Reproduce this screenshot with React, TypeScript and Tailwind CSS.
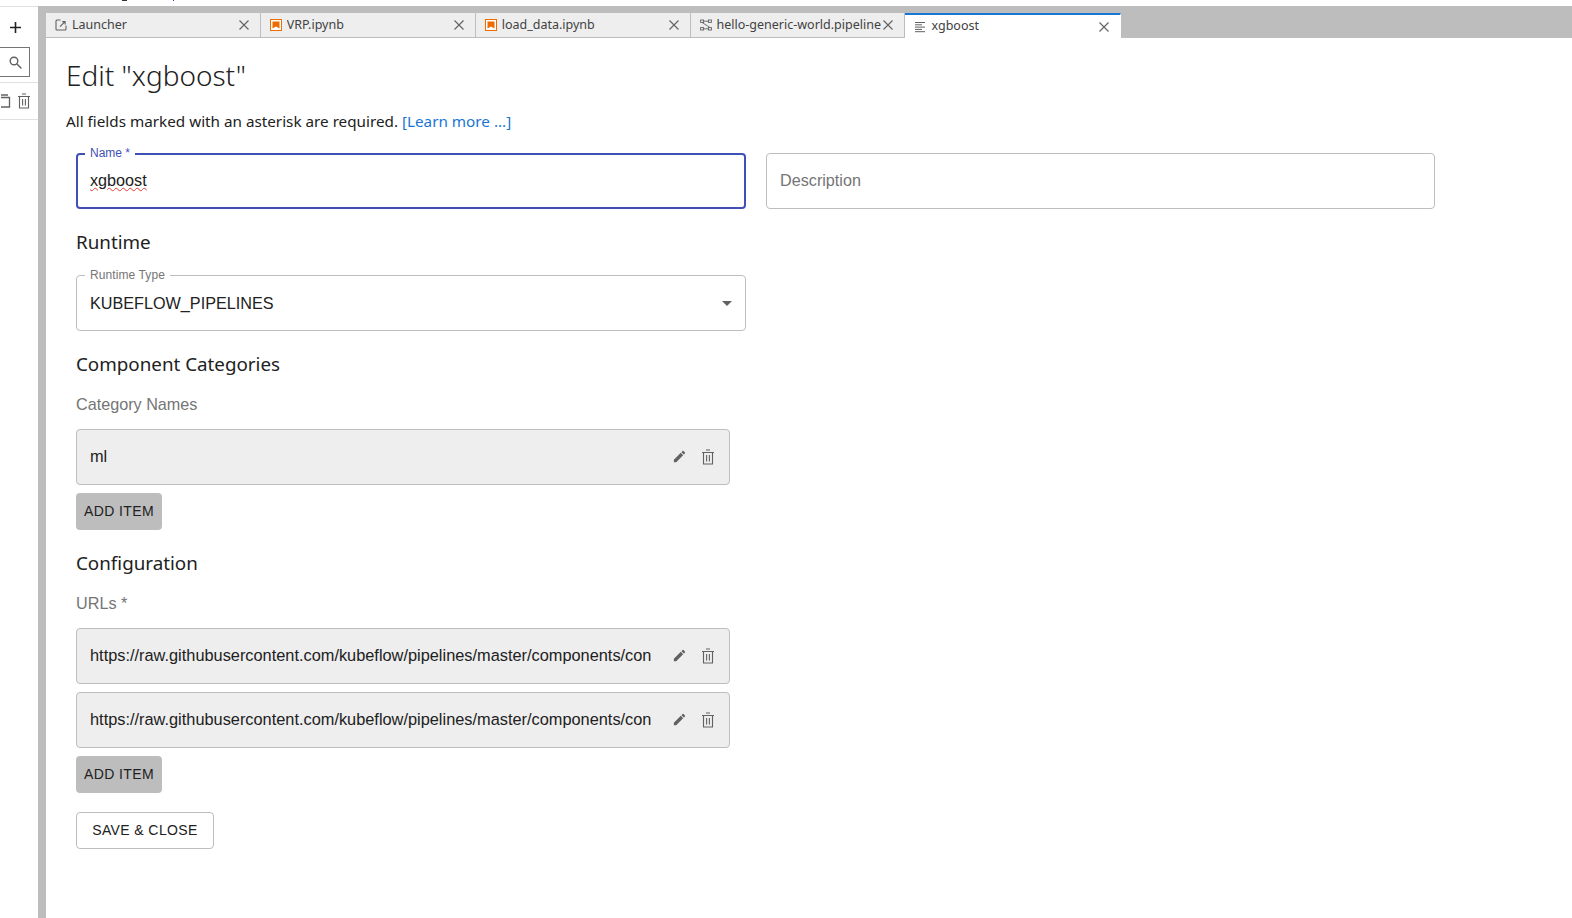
import type { ReactNode } from "react";

const pencil =
  "M3 17.25V21h3.75L17.81 9.94l-3.75-3.75L3 17.25zM20.71 7.04c.39-.39.39-1.02 0-1.41l-2.34-2.34c-.39-.39-1.02-.39-1.41 0l-1.83 1.83 3.75 3.75 1.83-1.83z";

const url = "https://raw.githubusercontent.com/kubeflow/pipelines/master/components/contrib/XGBoost/Train/component.yaml";

function CloseIcon() {
  return (
    <svg width="12" height="12" viewBox="0 0 12 12" className="shrink-0" stroke="#616161" strokeWidth="1.1" fill="none">
      <path d="M1.5 1.5l9 9M10.5 1.5l-9 9" />
    </svg>
  );
}

function TrashIcon({ color = "#616161" }: { color?: string }) {
  return (
    <svg width="14" height="16" viewBox="0 0 14 16" fill="none" stroke={color} strokeWidth="1.1">
      <path d="M1 3.5h12M5 1h4M2.5 3.5v11.5h9V3.5M5.6 6v6.5M8.4 6v6.5" />
    </svg>
  );
}

function LauncherIcon() {
  return (
    <svg width="12" height="12" viewBox="0 0 12 12" fill="none" stroke="#616161" strokeWidth="1.1">
      <path d="M5.5 1H2a1 1 0 0 0-1 1v8a1 1 0 0 0 1 1h8a1 1 0 0 0 1-1V6.5M7.2 2.6h2.9v2.9M10 2.7L5 7.7" />
    </svg>
  );
}

function NotebookIcon() {
  return (
    <svg width="12" height="12" viewBox="0 0 12 12">
      <rect x="0.5" y="0.5" width="11" height="11" fill="#fff" stroke="#ef6c00" />
      <path d="M2.5 2.5h7v7L6 7.5l-3.5 2z" fill="#ef6c00" />
    </svg>
  );
}

function PipelineIcon() {
  return (
    <svg width="12" height="12" viewBox="0 0 12 12" fill="none" stroke="#616161" strokeWidth="0.9">
      <rect x="0.6" y="1" width="3" height="2.4" />
      <rect x="8.4" y="1" width="3" height="2.4" />
      <rect x="0.6" y="8.6" width="3" height="2.4" />
      <rect x="8.4" y="8.6" width="3" height="2.4" />
      <path d="M3.6 2.2h4.8M2 3.4L10 8.6M3.6 9.8h4.8" />
    </svg>
  );
}

function TextIcon() {
  return (
    <svg width="12" height="12" viewBox="0 0 12 12" stroke="#616161" strokeWidth="1">
      <path d="M1 1.5h10M1 3.8h7M1 6.1h10M1 8.4h7M1 10.7h10" />
    </svg>
  );
}

function Tab({ icon, title, active }: { icon: ReactNode; title: string; active?: boolean }) {
  return (
    <div
      className={`flex items-center shrink-0 pl-[9px] pr-[10px] border-r ${
        active
          ? "w-[215.5px] h-[25px] bg-white border-t-2 border-t-[#1976d2] border-r-transparent"
          : "w-[214.85px] h-[25px] bg-[#eeeeee] border-r-[#bdbdbd] border-b border-b-[#bdbdbd]"
      }`}
    >
      <span className="w-[17px] shrink-0 flex items-center">{icon}</span>
      <span className="flex-1 min-w-0 overflow-hidden whitespace-nowrap text-[12.5px] text-[#424242] font-['Noto_Sans',sans-serif]">
        {title}
      </span>
      <CloseIcon />
    </div>
  );
}

function SectionHeading({ children, className }: { children: ReactNode; className: string }) {
  return <h2 className={`text-[18.8px] leading-6 text-[#212121] font-['Noto_Sans',sans-serif] ${className}`}>{children}</h2>;
}

function ListItem({ text, className = "" }: { text: string; className?: string }) {
  return (
    <div className={`w-[654px] h-[56px] bg-[#eeeeee] border border-[#bdbdbd] rounded flex items-center pl-[13px] ${className}`}>
      <span className="w-[561px] -mt-[2px] overflow-hidden whitespace-nowrap text-[16.35px] text-[#212121]">{text}</span>
      <div className="ml-[21px] -mt-[1px] flex items-center gap-[14px]">
        <svg width="15" height="15" viewBox="0 0 24 24" fill="#616161">
          <path d={pencil} />
        </svg>
        <TrashIcon />
      </div>
    </div>
  );
}

function AddItem({ className }: { className: string }) {
  return (
    <button className={`block w-[86px] h-[37px] pb-[1px] bg-[#bdbdbd] rounded text-sm tracking-[0.4px] text-[#212121] ${className}`}>
      ADD ITEM
    </button>
  );
}

export default function App() {
  return (
    <div className="h-[918px] w-[1572px] overflow-hidden bg-white flex flex-col font-['Liberation_Sans',sans-serif]">
      {/* bottom of a text line, mostly cut off by the screenshot */}
      <div className="h-[6px] bg-white flex items-start pl-[122px]">
        <span className="w-[5px] h-[1px] bg-[#333333]" />
        <span className="ml-[46px] w-[1px] h-[1px] bg-[#7b1fa2]" />
      </div>
      <div className="flex flex-1 min-h-0">
        {/* left panel, cut off by the screenshot */}
        <aside className="w-[38px] shrink-0 bg-white border-t border-[#e0e0e0] flex flex-col">
          <div className="h-[40px] flex items-center justify-start pl-[10px] text-[#212121]">
            <svg width="11" height="11" viewBox="0 0 11 11" stroke="#212121" strokeWidth="1.6">
              <path d="M5.5 0v11M0 5.5h11" />
            </svg>
          </div>
          <div className="w-[30px] h-[30px] border border-l-0 border-[#757575] flex items-center justify-end pr-[7px]">
            <svg width="13" height="13" viewBox="0 0 13 13" fill="none" stroke="#616161" strokeWidth="1.4">
              <circle cx="5" cy="5" r="3.8" />
              <path d="M8 8l4.4 4.4" />
            </svg>
          </div>
          <div className="mt-[5px] h-[38px] border-y border-[#e0e0e0] flex items-center justify-end pr-[7px] gap-[6px] overflow-hidden">
            <svg width="10" height="14" viewBox="0 0 10 14" fill="none" stroke="#616161" strokeWidth="1.3">
              <path d="M-2 1h9M-1 3.5h9.5v9.5H-1z" />
            </svg>
            <TrashIcon />
          </div>
        </aside>

        <div className="flex-1 min-w-0 flex flex-col bg-[#bdbdbd]">
          <div className="h-[32px] pl-[8px] pt-[7px] flex shrink-0">
            <Tab icon={<LauncherIcon />} title="Launcher" />
            <Tab icon={<NotebookIcon />} title="VRP.ipynb" />
            <Tab icon={<NotebookIcon />} title="load_data.ipynb" />
            <Tab icon={<PipelineIcon />} title="hello-generic-world.pipeline" />
            <Tab icon={<TextIcon />} title="xgboost" active />
          </div>

          <main className="flex-1 ml-[8px] bg-white pl-[20px]">
            <h1 className="mt-[19px] text-[28px] leading-9 font-light text-[#212121] font-['Noto_Sans',sans-serif]">Edit "xgboost"</h1>
            <p className="mt-[16px] text-[15.25px] leading-6 text-[#212121] font-['Noto_Sans',sans-serif]">
              All fields marked with an asterisk are required. <span className="text-[#1976d2]">[Learn more ...]</span>
            </p>

            <div className="ml-[10px] mt-[20px]">
              <div className="flex gap-[20px]">
                <div className="relative w-[670px] h-[56px] border-2 border-[#3f51b5] rounded flex items-center pl-[12px] pb-[2px] text-[16.2px] text-[#212121]">
                  <span className="absolute left-[7px] -top-[9px] bg-white px-[5px] text-xs leading-[14px] text-[#3f51b5]">Name *</span>
                  <span className="underline decoration-wavy decoration-[#e53935] decoration-1 underline-offset-1">xgboost</span>
                </div>
                <div className="w-[669px] h-[56px] border border-[#bdbdbd] rounded flex items-center pl-[13px] pb-[2px] text-[16.2px] text-[#757575]">
                  Description
                </div>
              </div>

              <SectionHeading className="mt-[21px]">Runtime</SectionHeading>

              <div className="relative mt-[21px] w-[670px] h-[56px] border border-[#bdbdbd] rounded flex items-center justify-between pl-[13px] pr-[13px] text-[16.2px] text-[#212121]">
                <span className="absolute left-[8px] -top-[8px] bg-white px-[5px] text-xs tracking-[0.1px] leading-[14px] text-[#757575]">Runtime Type</span>
                KUBEFLOW_PIPELINES
                <svg width="10" height="5" viewBox="0 0 10 5" fill="#616161">
                  <path d="M0 0h10L5 5z" />
                </svg>
              </div>

              <SectionHeading className="mt-[21px]">Component Categories</SectionHeading>
              <p className="mt-[16px] text-[16.2px] leading-6 text-[#757575]">Category Names</p>
              <ListItem text="ml" className="mt-[13px]" />
              <AddItem className="mt-[8px]" />

              <SectionHeading className="mt-[21px]">Configuration</SectionHeading>
              <p className="mt-[16px] text-[16.2px] leading-6 text-[#757575]">URLs *</p>
              <ListItem text={url} className="mt-[13px]" />
              <ListItem text={url} className="mt-[8px]" />
              <AddItem className="mt-[8px]" />

              <button className="block mt-[19px] w-[138px] h-[37px] pb-[1px] bg-white border border-[#bdbdbd] rounded text-sm tracking-[0.4px] text-[#212121]">
                SAVE &amp; CLOSE
              </button>
            </div>
          </main>
        </div>
      </div>
    </div>
  );
}
